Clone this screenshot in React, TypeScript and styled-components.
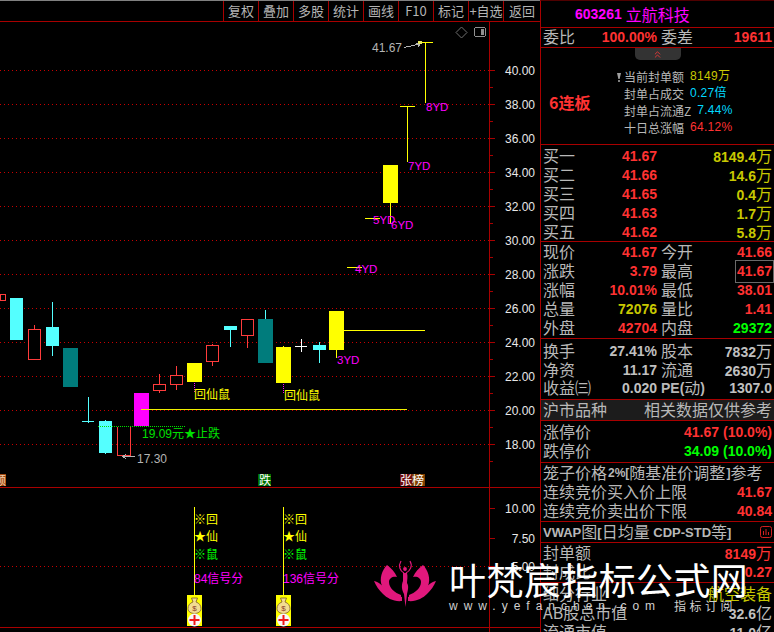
import React from 'react';
import styled, { createGlobalStyle } from 'styled-components';
import { ChevronsUp } from 'lucide-react';

const FONT = '"Liberation Sans", "Noto Sans CJK SC", sans-serif';
const CJK = '"Noto Sans CJK SC", "Liberation Sans", sans-serif';
const LINE = '#a80000';

const tones: Record<string, string> = {
    red: '#ff3232',
    yellow: '#c8c800',
    green: '#00ff00',
    gray: '#c0c0c0',
    cyan: '#00d8ff',
    magenta: '#ff00ff',
};

const GlobalStyle = createGlobalStyle`
    html, body {
        margin: 0;
        padding: 0;
        background: #000;
        overflow: hidden;
    }
`;

const Page = styled.div`
    position: relative;
    display: flex;
    width: 774px;
    height: 632px;
    overflow: hidden;
    background: #000;
`;

const LeftColumn = styled.div`
    width: 540px;
    flex: none;
    border-top: 1px solid #808080;
    box-sizing: border-box;
`;

const Toolbar = styled.div`
    display: flex;
    justify-content: flex-end;
    height: 20px;
    border-bottom: 1px solid ${LINE};
`;

const ToolButton = styled.div<{ $wide?: boolean }>`
    width: ${(p) => (p.$wide ? 36 : 34)}px;
    border-left: 1px solid ${LINE};
    color: #b4b4b4;
    font: 13px/20px ${CJK};
    text-align: center;
    white-space: nowrap;
`;

const ChartSvg = styled.svg`
    display: block;
    border-bottom: 1px solid ${LINE};
    shape-rendering: crispEdges;
`;

const ChartText = styled.text<{ $fill: string; $size?: number }>`
    fill: ${(p) => p.$fill};
    font-family: ${FONT};
    font-size: ${(p) => p.$size ?? 12}px;
    shape-rendering: auto;
`;

const DottedLine = styled.line`
    shape-rendering: auto;
`;

const Tail = styled.div`
    width: 490px;
    height: 4px;
    box-sizing: border-box;
    border-right: 1px solid ${LINE};
`;

const SidePanel = styled.div`
    flex: 1;
    border-left: 1px solid ${LINE};
    border-top: 1px solid #500000;
    height: 640px;
    box-sizing: border-box;
`;

const Section = styled.div<{ $height: number; $shade?: boolean }>`
    display: flex;
    flex-direction: column;
    justify-content: center;
    height: ${(p) => p.$height}px;
    border-bottom: 1px solid ${LINE};
    background: ${(p) => (p.$shade ? '#1c1c1c' : 'transparent')};
`;

const OpenSection = styled.div`
    padding-top: 2px;
`;

const TitleRow = styled.div`
    display: flex;
    align-items: center;
    gap: 4px;
    padding-left: 34px;
    color: #ff00ff;
`;

const Code = styled.span`
    font: bold 14px/19px ${FONT};
`;

const StockName = styled.span`
    font: 16px/19px ${CJK};
`;

const Row = styled.div`
    display: flex;
    justify-content: space-between;
    align-items: center;
    height: 19px;
    padding: 0 2px 0 2px;
    white-space: nowrap;
`;

const PairRow = styled.div`
    display: grid;
    grid-template-columns: 114px 1fr;
    column-gap: 4px;
    height: 19px;
    padding: 0 2px 0 2px;
    white-space: nowrap;
`;

const Cell = styled.div`
    display: flex;
    justify-content: space-between;
    align-items: center;
`;

const Label = styled.span`
    margin-top: -2px;
    color: #b8b8b8;
    font: 16px/19px ${CJK};
`;

const Value = styled.span<{ $tone?: string; $boxed?: boolean }>`
    color: ${(p) => tones[p.$tone ?? 'gray']};
    font: bold 14px/19px ${FONT};
    outline: ${(p) => (p.$boxed ? '1px solid #6a6a6a' : 'none')};
    outline-offset: 1px;
`;

const Unit = styled.span`
    font: 16px/19px ${CJK};
`;

const PlainValue = styled.span<{ $tone: string }>`
    margin-top: -2px;
    color: ${(p) => tones[p.$tone]};
    font: 16px/19px ${CJK};
`;

const Tab = styled.div`
    flex: none;
    display: flex;
    align-items: center;
    justify-content: center;
    width: 46px;
    height: 12px;
    margin: 0 auto;
    background: #333;
    border-radius: 0 0 5px 5px;
    color: #e83838;
`;

const SealBody = styled.div`
    flex: 1;
    display: flex;
    align-items: center;
    padding-left: 8px;
`;

const BoardCount = styled.div`
    width: 42px;
    color: #ff3232;
    font: bold 16px/20px ${CJK};
    white-space: nowrap;
`;

const SealInfo = styled.div`
    position: relative;
    margin-left: 33px;
`;

const SealPin = styled.svg`
    position: absolute;
    left: -7px;
    top: 5px;
`;

const SealRow = styled.div`
    display: flex;
    gap: 6px;
    height: 17px;
    align-items: center;
    white-space: nowrap;
`;

const SealLabel = styled.span`
    color: #b8b8b8;
    font: 12px/17px ${CJK};
`;

const SealValue = styled.span<{ $tone: string }>`
    color: ${(p) => tones[p.$tone]};
    font: 12px/17px ${FONT};
    letter-spacing: 0.3px;
`;

const CageLabel = styled.div`
    display: flex;
    align-items: center;
    color: #b8b8b8;
`;

const CageBold = styled.span`
    margin-left: 1px;
    font: bold 12px/19px ${FONT};
`;

const VwapBold = styled.span`
    color: #b8b8b8;
    font: bold 13px/19px ${FONT};
`;

const PeLabel = styled.span`
    display: flex;
    align-items: center;
    color: #b8b8b8;
    font: bold 14px/19px ${FONT};
`;

const FlexRow = styled.div`
    display: flex;
    align-items: center;
`;

const Watermark = styled.div`
    position: absolute;
    left: 374px;
    top: 560px;
    display: flex;
    gap: 13px;
    pointer-events: none;
`;

const WatermarkBlock = styled.div`
    display: flex;
    flex-direction: column;
`;

const WatermarkTitle = styled.div`
    color: #fff;
    font: 37px/38px ${CJK};
    letter-spacing: 0.4px;
    white-space: nowrap;
`;

const WatermarkSub = styled.div`
    display: flex;
    gap: 13px;
    margin-top: 1px;
    color: #d0d0d0;
    font: 12px/14px ${CJK};
    white-space: nowrap;
`;

const WatermarkUrl = styled.span`
    font-family: ${FONT};
    letter-spacing: 6px;
`;

const WatermarkTag = styled.span`
    letter-spacing: 3.5px;
`;

type Candle = {
    left: number;
    right: number;
    top: number;
    bottom: number;
    high?: number;
    low?: number;
    color: string;
    wick?: string;
    hollow?: boolean;
};

const CYAN = '#54ffff';
const TEAL = '#007c7c';
const RED = '#ff3c3c';
const YELLOW = '#ffff00';
const MAGENTA = '#ff00ff';

const candles: Candle[] = [
    { left: 0, right: 6, top: 294, bottom: 301, color: RED, hollow: true },
    { left: 10, right: 23, top: 298, bottom: 340, color: CYAN },
    { left: 28, right: 41, top: 329, bottom: 360, high: 325, color: RED, hollow: true },
    { left: 46, right: 59, top: 327, bottom: 346, high: 302, low: 356, color: CYAN },
    { left: 63, right: 78, top: 348, bottom: 387, color: TEAL },
    { left: 99, right: 112, top: 421, bottom: 453, high: 420, low: 454, color: CYAN },
    { left: 134, right: 149, top: 393, bottom: 426, color: MAGENTA },
    { left: 153, right: 166, top: 384, bottom: 391, high: 374, low: 393, color: RED, hollow: true },
    { left: 170, right: 183, top: 375, bottom: 385, high: 366, low: 390, color: RED, hollow: true },
    { left: 187, right: 202, top: 363, bottom: 382, color: YELLOW },
    { left: 206, right: 219, top: 345, bottom: 362, high: 344, low: 366, color: RED, hollow: true },
    { left: 224, right: 237, top: 326, bottom: 330, low: 347, color: CYAN },
    { left: 241, right: 254, top: 319, bottom: 336, low: 348, color: RED, hollow: true },
    { left: 258, right: 273, top: 319, bottom: 363, high: 310, color: TEAL, wick: CYAN },
    { left: 276, right: 291, top: 347, bottom: 383, high: 346, color: YELLOW },
    { left: 313, right: 326, top: 345, bottom: 350, high: 342, low: 363, color: CYAN },
    { left: 329, right: 344, top: 311, bottom: 350, low: 358, color: YELLOW },
    { left: 383, right: 398, top: 165, bottom: 203, low: 224, color: YELLOW },
];

// limit-up bars: flat cap with a single stick
const sticks = [
    { x1: 347, x2: 362, y: 267, from: 267, to: 267, color: YELLOW },
    { x1: 365, x2: 380, y: 218, from: 218, to: 218, color: YELLOW },
    { x1: 400, x2: 415, y: 106, from: 106, to: 162, color: YELLOW },
    { x1: 418, x2: 433, y: 42, from: 42, to: 103, color: YELLOW },
    { x1: 82, x2: 94, y: 421, from: 397, to: 423, color: CYAN },
    { x1: 295, x2: 307, y: 346, from: 339, to: 352, color: '#ffffff' },
];

const ydLabels = [
    { x: 337, y: 364, text: '3YD' },
    { x: 355, y: 273, text: '4YD' },
    { x: 373, y: 224, text: '5YD' },
    { x: 391, y: 229, text: '6YD' },
    { x: 408, y: 170, text: '7YD' },
    { x: 426, y: 111, text: '8YD' },
];

const priceScale = [40, 38, 36, 34, 32, 30, 28, 26, 24, 22, 20, 18];

function CandleMark({ candle }: { candle: Candle }) {
    const { left, right, top, bottom, high, low, color, wick, hollow } = candle;
    const mid = Math.floor((left + right) / 2) + 0.5;
    return (
        <g>
            {high !== undefined && <line x1={mid} x2={mid} y1={high} y2={top} stroke={wick ?? color} />}
            {low !== undefined && <line x1={mid} x2={mid} y1={bottom} y2={low} stroke={wick ?? color} />}
            {hollow ? (
                <rect
                    x={left + 0.5}
                    y={top + 0.5}
                    width={right - left - 1}
                    height={bottom - top - 1}
                    fill="#000"
                    stroke={color}
                />
            ) : (
                <rect x={left} y={top} width={right - left} height={bottom - top} fill={color} />
            )}
        </g>
    );
}

function MainChart() {
    return (
        <ChartSvg width={540} height={465} viewBox="0 22 540 465">
            {priceScale.map((price, i) => {
                const y = 70 + i * 34;
                return (
                    <g key={price}>
                        <DottedLine x1={0} x2={489} y1={y + 0.5} y2={y + 0.5} stroke="#c80000" strokeDasharray="1 3" />
                        <line x1={490} x2={495} y1={y + 0.5} y2={y + 0.5} stroke={LINE} />
                        <line x1={490} x2={493} y1={y + 17.5} y2={y + 17.5} stroke={LINE} />
                        <ChartText $fill="#e8e8e8" x={535} y={y + 5} textAnchor="end">
                            {price.toFixed(2)}
                        </ChartText>
                    </g>
                );
            })}
            <line x1={489.5} x2={489.5} y1={22} y2={487} stroke={LINE} />

            {candles.map((c) => (
                <CandleMark key={c.left} candle={c} />
            ))}
            {sticks.map((s) => {
                const mid = Math.floor((s.x1 + s.x2) / 2) + 0.5;
                return (
                    <g key={s.x1}>
                        <line x1={s.x1} x2={s.x2} y1={s.y + 0.5} y2={s.y + 0.5} stroke={s.color} />
                        <line x1={mid} x2={mid} y1={s.from} y2={s.to} stroke={s.color} />
                    </g>
                );
            })}

            {/* open topped bar under the stop line */}
            <path d="M117.5 427V455.5H130.5V427" fill="none" stroke={RED} />
            <DottedLine x1={98} x2={185} y1={426.5} y2={426.5} stroke="#00e000" strokeDasharray="1 1" />
            <line x1={141} x2={407} y1={409.5} y2={409.5} stroke="#f0f000" />
            <line x1={344} x2={425} y1={330.5} y2={330.5} stroke={YELLOW} />
            <DottedLine x1={194.5} x2={194.5} y1={383} y2={393} stroke={MAGENTA} strokeDasharray="1 1" />
            <DottedLine x1={283.5} x2={283.5} y1={384} y2={394} stroke={MAGENTA} strokeDasharray="1 1" />

            <ChartText $fill={YELLOW} x={194} y={399}>回仙鼠</ChartText>
            <ChartText $fill={YELLOW} x={284} y={400}>回仙鼠</ChartText>
            <ChartText $fill="#00e000" x={142} y={438}>19.09元★止跌</ChartText>

            <ChartText $fill="#b4b4b4" x={137} y={463}>17.30</ChartText>
            <path d="M135 456.5H123M126 454L123 456.5L126 459" fill="none" stroke="#b4b4b4" />

            {ydLabels.map((label) => (
                <ChartText key={label.text} $fill={MAGENTA} $size={11.5} x={label.x} y={label.y}>
                    {label.text}
                </ChartText>
            ))}

            <ChartText $fill="#b4b4b4" x={372} y={52}>41.67</ChartText>
            <path d="M404 47.5L420 44M416 43L420 44L418 47" fill="none" stroke="#b4b4b4" />
            <rect x={418} y={41} width={4} height={3} fill="#e8e860" />

            <path d="M461.5 27L467 32.5L461.5 38L456 32.5Z" fill="none" stroke="#707070" shapeRendering="auto" />
            <rect x={474.5} y={27.5} width={11} height={9} rx={2} fill="none" stroke="#909090" />
            <rect x={481} y={29} width={3} height={6} fill="#909090" />

            <rect x={0} y={474} width={6} height={12} fill="#a04810" />
            <ChartText $fill="#f0d0b0" x={-6} y={485}>额</ChartText>
            <rect x={258} y={474} width={13} height={12} fill="#007000" />
            <ChartText $fill="#ffffff" x={259} y={485}>跌</ChartText>
            <rect x={400} y={474} width={12} height={12} fill="#701010" />
            <ChartText $fill="#ffffff" x={400} y={485}>张</ChartText>
            <rect x={412} y={474} width={13} height={12} fill="#804000" />
            <ChartText $fill="#ffffff" x={412} y={485}>榜</ChartText>
        </ChartSvg>
    );
}

function MoneyStack({ x }: { x: number }) {
    return (
        <g shapeRendering="auto">
            <rect x={x - 7.5} y={595} width={15} height={31} fill={YELLOW} shapeRendering="crispEdges" />
            <path
                d={`M${x - 3} 598H${x + 3}L${x + 1.5} 602C${x + 5} 603 ${x + 6.5} 606 ${x + 6.5} 608.5C${x + 6.5} 612 ${x + 3} 613.5 ${x} 613.5C${x - 3} 613.5 ${x - 6.5} 612 ${x - 6.5} 608.5C${x - 6.5} 606 ${x - 5} 603 ${x - 1.5} 602Z`}
                fill="#f2dc90"
                stroke="#7a5a28"
                strokeWidth={0.8}
            />
            <ChartText $fill="#8a3c28" $size={8} x={x - 2.2} y={611}>$</ChartText>
            <circle cx={x} cy={620} r={6.5} fill="#f8f8f8" />
            <rect x={x - 1} y={615} width={2} height={10} fill="#f01818" />
            <rect x={x - 5} y={619} width={10} height={2} fill="#f01818" />
        </g>
    );
}

function SignalColumn({ x, score }: { x: number; score: number }) {
    return (
        <g>
            <line x1={x + 0.5} x2={x + 0.5} y1={507} y2={595} stroke={YELLOW} />
            <ChartText $fill={YELLOW} x={x} y={524}>※回</ChartText>
            <ChartText $fill={YELLOW} x={x} y={541}>★仙</ChartText>
            <ChartText $fill="#00ff00" x={x} y={559}>※鼠</ChartText>
            <ChartText $fill={MAGENTA} x={x} y={583}>{score}信号分</ChartText>
            <MoneyStack x={x + 0.5} />
        </g>
    );
}

function SignalPanel() {
    const labels = [
        { y: 508, text: '10.00' },
        { y: 538, text: '7.50' },
        { y: 566, text: '5.00' },
    ];
    return (
        <ChartSvg width={540} height={139} viewBox="0 488 540 139">
            <DottedLine x1={0} x2={489} y1={566.5} y2={566.5} stroke="#c80000" strokeDasharray="1 3" />
            <line x1={489.5} x2={489.5} y1={488} y2={627} stroke={LINE} />
            {labels.map((label) => (
                <g key={label.text}>
                    <line x1={490} x2={495} y1={label.y + 0.5} y2={label.y + 0.5} stroke={LINE} />
                    <ChartText $fill="#e8e8e8" x={535} y={label.y + 5} textAnchor="end">
                        {label.text}
                    </ChartText>
                </g>
            ))}
            <SignalColumn x={194} score={84} />
            <SignalColumn x={283} score={136} />
        </ChartSvg>
    );
}

function LotusLogo() {
    const petals = (
        <>
            <path d="M0 21C5 22 9 26 13 30C17 34 22 36 28 37L28 41C20 42 13 38 9 34C5 30 2 26 0 21Z" />
            <path d="M13 5C17 8 21 12 23 17C19 16 15 18 15 22C15 28 21 33 27 35L27 38C20 38 12 33 8 26C5 19 8 10 13 5Z" />
        </>
    );
    return (
        <svg width={62} height={48} viewBox="0 0 62 48">
            <g fill="#e0187c">
                {petals}
                <g transform="translate(62 0) scale(-1 1)">{petals}</g>
                <circle cx={31} cy={9} r={1.9} />
                <path d="M29 13H33C34 17 33 20 33 23C35 26 34 30 33 34L31.5 47L30 34C28 30 27 26 29 21C29 18 29 16 29 13Z" />
            </g>
            <path d="M27 1C24 6 26 11 30 13M36 1C39 6 36 11 32 13" fill="none" stroke="#e0187c" strokeWidth={1.2} />
        </svg>
    );
}

function BarsIcon() {
    return (
        <svg width={12} height={12} viewBox="0 0 12 12" fill="none" stroke="#d02020">
            <rect x={0.5} y={0.5} width={11} height={11} rx={2} />
            <path d="M3.5 9V5M6 9V3M8.5 9V6" />
        </svg>
    );
}

const buyRows = [
    ['买一', '41.67', '8149.4'],
    ['买二', '41.66', '14.6'],
    ['买三', '41.65', '0.4'],
    ['买四', '41.63', '1.7'],
    ['买五', '41.62', '5.8'],
];

type Quote = [string, string, string, string, string, string];

const quoteRows: Quote[] = [
    ['现价', '41.67', 'red', '今开', '41.66', 'red'],
    ['涨跌', '3.79', 'red', '最高', '41.67', 'red'],
    ['涨幅', '10.01%', 'red', '最低', '38.01', 'red'],
    ['总量', '72076', 'yellow', '量比', '1.41', 'red'],
    ['外盘', '42704', 'red', '内盘', '29372', 'green'],
];

function Pair({ label, value, tone, unit, boxed }: { label: React.ReactNode; value: string; tone?: string; unit?: string; boxed?: boolean }) {
    return (
        <Cell>
            <Label>{label}</Label>
            <Value $tone={tone} $boxed={boxed}>
                {value}
                {unit && <Unit>{unit}</Unit>}
            </Value>
        </Cell>
    );
}

function SidePanelContent() {
    return (
        <SidePanel>
            <Section $height={26}>
                <TitleRow>
                    <Code>603261</Code>
                    <StockName>立航科技</StockName>
                </TitleRow>
            </Section>
            <Section $height={19}>
                <PairRow>
                    <Pair label="委比" value="100.00%" tone="red" />
                    <Pair label="委差" value="19611" tone="red" />
                </PairRow>
            </Section>
            <Section $height={96}>
                <Tab>
                    <ChevronsUp size={11} strokeWidth={2} />
                </Tab>
                <SealBody>
                    <BoardCount>6连板</BoardCount>
                    <SealInfo>
                        <SealPin width={4} height={9} viewBox="0 0 4 9">
                            <path d="M0 0H4L2.6 6H1.4ZM1.2 7H2.8V9H1.2Z" fill="#a0a0a0" />
                        </SealPin>
                        <SealRow>
                            <SealLabel>当前封单额</SealLabel>
                            <SealValue $tone="yellow">8149万</SealValue>
                        </SealRow>
                        <SealRow>
                            <SealLabel>封单占成交</SealLabel>
                            <SealValue $tone="cyan">0.27倍</SealValue>
                        </SealRow>
                        <SealRow>
                            <SealLabel>封单占流通Z</SealLabel>
                            <SealValue $tone="cyan">7.44%</SealValue>
                        </SealRow>
                        <SealRow>
                            <SealLabel>十日总涨幅</SealLabel>
                            <SealValue $tone="red">64.12%</SealValue>
                        </SealRow>
                    </SealInfo>
                </SealBody>
            </Section>
            <Section $height={96}>
                {buyRows.map(([label, price, volume]) => (
                    <PairRow key={label}>
                        <Pair label={label} value={price} tone="red" />
                        <Cell>
                            <span />
                            <Value $tone="yellow">
                                {volume}
                                <Unit>万</Unit>
                            </Value>
                        </Cell>
                    </PairRow>
                ))}
            </Section>
            <Section $height={96}>
                {quoteRows.map(([a, b, c, d, e, f]) => (
                    <PairRow key={a}>
                        <Pair label={a} value={b} tone={c} />
                        <Pair label={d} value={e} tone={f} boxed={d === '最高'} />
                    </PairRow>
                ))}
            </Section>
            <Section $height={60}>
                <PairRow>
                    <Pair label="换手" value="27.41%" />
                    <Pair label="股本" value="7832" unit="万" />
                </PairRow>
                <PairRow>
                    <Pair label="净资" value="11.17" />
                    <Pair label="流通" value="2630" unit="万" />
                </PairRow>
                <PairRow>
                    <Pair label="收益㈢" value="0.020" />
                    <Cell>
                        <PeLabel>
                            PE(<Label>动</Label>)
                        </PeLabel>
                        <Value>1307.0</Value>
                    </Cell>
                </PairRow>
            </Section>
            <Section $height={20} $shade>
                <Row>
                    <Label>沪市品种</Label>
                    <Label>相关数据仅供参考</Label>
                </Row>
            </Section>
            <Section $height={41}>
                <Row>
                    <Label>涨停价</Label>
                    <Value $tone="red">41.67 (10.0%)</Value>
                </Row>
                <Row>
                    <Label>跌停价</Label>
                    <Value $tone="green">34.09 (10.0%)</Value>
                </Row>
            </Section>
            <Section $height={58}>
                <Row>
                    <CageLabel>
                        <Label>笼子价格</Label>
                        <CageBold>2%[</CageBold>
                        <Label>随基准价调整</Label>
                        <CageBold>]</CageBold>
                        <Label>参考</Label>
                    </CageLabel>
                </Row>
                <Row>
                    <Label>连续竞价买入价上限</Label>
                    <Value $tone="red">41.67</Value>
                </Row>
                <Row>
                    <Label>连续竞价卖出价下限</Label>
                    <Value $tone="red">40.84</Value>
                </Row>
            </Section>
            <Section $height={20}>
                <Row>
                    <FlexRow>
                        <VwapBold>VWAP</VwapBold>
                        <Label>图</Label>
                        <VwapBold>[</VwapBold>
                        <Label>日均量</Label>
                        <VwapBold>&nbsp;CDP-STD</VwapBold>
                        <Label>等</Label>
                        <VwapBold>]</VwapBold>
                    </FlexRow>
                    <BarsIcon />
                </Row>
            </Section>
            <Section $height={39}>
                <Row>
                    <Label>封单额</Label>
                    <Value $tone="red">
                        8149<Unit>万</Unit>
                    </Value>
                </Row>
                <Row>
                    <Label>封成比</Label>
                    <Value $tone="red">0.27</Value>
                </Row>
            </Section>
            <OpenSection>
                <Row>
                    <Label>细分行业</Label>
                    <PlainValue $tone="yellow">航空装备</PlainValue>
                </Row>
                <Row>
                    <Label>AB股总市值</Label>
                    <Value>
                        32.6<Unit>亿</Unit>
                    </Value>
                </Row>
                <Row>
                    <Label>流通市值</Label>
                    <Value>
                        11.0<Unit>亿</Unit>
                    </Value>
                </Row>
            </OpenSection>
        </SidePanel>
    );
}

export default function App() {
    const tools = ['复权', '叠加', '多股', '统计', '画线', 'F10', '标记', '+自选', '返回'];
    return (
        <Page>
            <GlobalStyle />
            <LeftColumn>
                <Toolbar>
                    {tools.map((tool) => (
                        <ToolButton key={tool} $wide={tool === '返回'}>
                            {tool}
                        </ToolButton>
                    ))}
                </Toolbar>
                <MainChart />
                <SignalPanel />
                <Tail />
            </LeftColumn>
            <SidePanelContent />
            <Watermark>
                <LotusLogo />
                <WatermarkBlock>
                    <WatermarkTitle>叶梵宸指标公式网</WatermarkTitle>
                    <WatermarkSub>
                        <WatermarkUrl>www.yefanchen.com</WatermarkUrl>
                        <WatermarkTag>指标订阅</WatermarkTag>
                    </WatermarkSub>
                </WatermarkBlock>
            </Watermark>
        </Page>
    );
}
